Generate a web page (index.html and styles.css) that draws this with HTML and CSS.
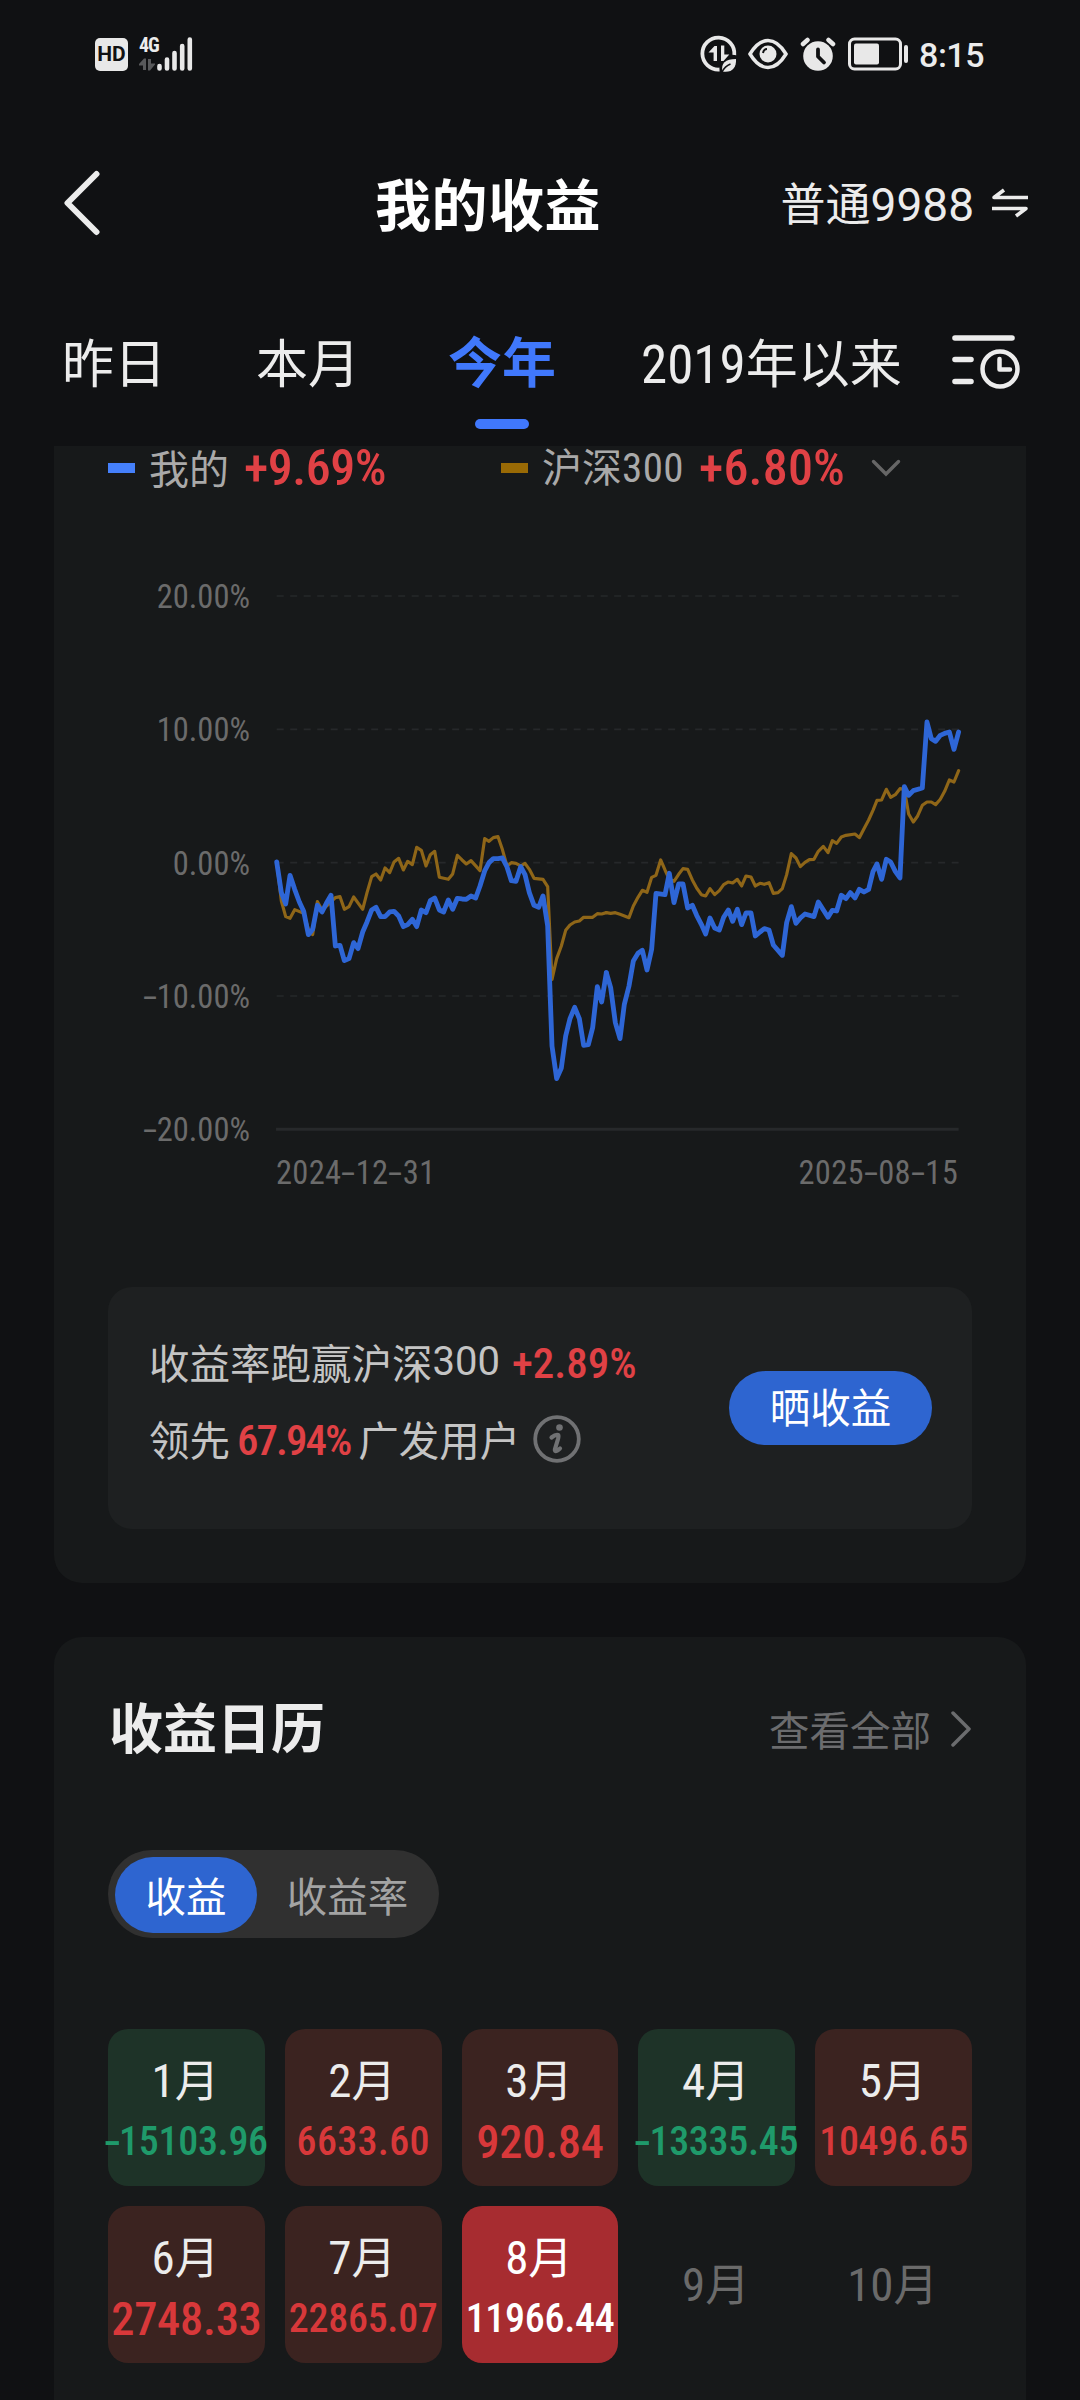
FILE: index.html
```html
<!DOCTYPE html>
<html lang="zh-CN">
<head>
<meta charset="utf-8">
<title>我的收益</title>
<link rel="stylesheet" href="styles.css">
</head>
<body>
<div class="screen">
  <div class="status-bar">
    <div class="status-left">
      <span class="hd">HD</span>
      <span class="network"><span class="network-type">4G</span>
        <svg width="17" height="13" viewBox="0 0 17 13" fill="#58595b"><path d="M0 6 5 0.5h2V12H4V7.5H0zM16 6.500l-5 6H9V1h3v4.500h4z"/></svg>
      </span>
      <svg class="bars" width="36" height="34" viewBox="0 0 36 34" stroke="#e8e8e8" stroke-width="4.600" stroke-linecap="round"><path d="M2.500 29v2.500M10 22.500v9M17.500 16v15.500M25.200 9v22.500M32.800 2.500v29"/></svg>
    </div>
    <div class="status-right">
      <svg width="38" height="38" viewBox="0 0 38 38" fill="none" stroke="#e8e8e8"><path d="M34.300 20A16 16 0 1 0 19.500 34.500" stroke-width="3.800"/><path d="M8.500 17.500 14.500 11h2.500v15h-3.400v-8.500zM21 10.500h3.300v9h5L23.500 26H21z" fill="#e8e8e8" stroke="none"/><path d="M22.500 36.500c-2-8 3-12.500 13.500-12.500 .5 9-4 14-13.500 12.500z" fill="#e8e8e8" stroke="none"/><path d="M22 37c2-4 5-6.500 8.500-8" stroke="#101113" stroke-width="1.500"/></svg>
      <svg width="40" height="34" viewBox="0 0 40 34"><path d="M2 17C8 7 14 3.500 20 3.500S32 7 38 17C32 27 26 30.500 20 30.500S8 27 2 17z" fill="none" stroke="#e8e8e8" stroke-width="3.500"/><circle cx="20" cy="17" r="8.500" fill="#e8e8e8"/><path d="M15 16c.5-2.500 2-4 4-4" fill="none" stroke="#101113" stroke-width="2"/></svg>
      <svg width="36" height="36" viewBox="0 0 36 36"><circle cx="18" cy="20" r="14.800" fill="#e8e8e8"/><path d="M3 8 7.500 4M33 8 28.500 4" stroke="#e8e8e8" stroke-width="4.500" stroke-linecap="round"/><path d="M18 13.500v7l6 6" fill="none" stroke="#101113" stroke-width="3.800" stroke-linecap="round" stroke-linejoin="round"/></svg>
      <svg width="62" height="34" viewBox="0 0 62 34"><rect x="1.500" y="2" width="51" height="30" rx="5" fill="none" stroke="#e8e8e8" stroke-width="3"/><rect x="6" y="6.500" width="25" height="21" rx="2" fill="#e8e8e8"/><path d="M58 10v14" stroke="#e8e8e8" stroke-width="4" stroke-linecap="round"/></svg>
      <span class="clock">8:15</span>
    </div>
  </div>

  <header class="nav">
    <svg class="back" width="36" height="66" viewBox="0 0 36 66" fill="none" stroke="#ececec" stroke-width="6" stroke-linecap="round" stroke-linejoin="round"><path d="M32.500 4 3.500 33l29 29"/></svg>
    <h1 class="nav-title">我的收益</h1>
    <div class="account">
      <span>普通<span class="account-no">9988</span></span>
      <svg width="38" height="30" viewBox="0 0 38 30" fill="none" stroke="#ececec" stroke-width="3.600" stroke-linejoin="round"><path d="M37 9.500H3L13 2"/><path d="M1 20.500h34L25 28"/></svg>
    </div>
  </header>

  <nav class="tabs">
    <span class="tab">昨日</span>
    <span class="tab">本月</span>
    <span class="tab tab-active">今年</span>
    <span class="tab tab-since"><span class="num tab-year">2019</span>年以来</span>
    <svg class="history" width="68" height="56" viewBox="0 0 68 56" fill="none" stroke="#ececec" stroke-width="5.600" stroke-linecap="round"><path d="M3 4h57M3 25.500h16M3 47.500h16"/><circle cx="48" cy="35" r="17.500" stroke-width="4.500"/><path d="M47.500 25v10.500H58" stroke-width="4.500" stroke-linejoin="round"/></svg>
  </nav>

  <section class="card card-chart">
    <div class="legend">
      <div class="legend-item legend-mine">
        <i class="swatch swatch-mine"></i><span class="legend-name">我的</span><b class="num rate">+9.69%</b>
      </div>
      <div class="legend-item">
        <i class="swatch swatch-index"></i><span class="legend-name">沪深<span class="num legend-no">300</span></span><b class="num rate rate-index">+6.80%</b>
        <svg class="expand" width="30" height="18" viewBox="0 0 30 18" fill="none" stroke="#666" stroke-width="3.400" stroke-linecap="round"><path d="M2.500 2.500 15 15 27.500 2.500"/></svg>
      </div>
    </div>

    <div class="chart">
      <div class="axis-y num">
        <span>20.00%</span><span>10.00%</span><span>0.00%</span><span><i class="dash">-</i>10.00%</span><span><i class="dash">-</i>20.00%</span>
      </div>
      <div class="plot">
        <svg class="lines" viewBox="0 -310 2052 1600" width="684" height="533.300" fill="none">
          <g stroke="#26282a" stroke-width="5" stroke-dasharray="21 19.500">
            <path d="M2-310h2046M2 90h2046M2 490h2046M2 890h2046"/>
          </g>
          <path d="M0 1290h2048" stroke="#27292b" stroke-width="9"/>
          <g class="series-index">
            <polyline transform="translate(-48 0)" points="50,488 64,605 77,652 90,657 104,631 131,642 145,690 158,706 172,607 186,632 213,608 226,595 240,592 253,630 267,622 281,593 308,630 321,580 335,532 348,524 362,542 375,506 389,520 402,488 416,477 430,512 443,486 457,496 470,444 484,453 498,500 511,466 524,456 538,534 565,540 578,524 592,468 606,482 619,494 633,484 660,514 674,418 687,426 700,415 714,412 727,450 741,500 754,490 768,492 782,500 795,492 808,510 822,537 849,540 863,562 876,840 890,778 904,740 917,693 930,677 944,668 958,665 971,654 998,654 1012,643 1025,644 1039,640"/>
            <polyline transform="translate(972 0)" points="19,640 32,642 46,640 60,645 87,655 100,620 114,594 127,573 141,579 155,534 168,528 182,482 195,512 208,540 222,546 236,525 249,508 263,510 277,542 290,566 304,586 317,590 330,568 344,586 358,574 371,556 385,548 398,551 412,540 425,560 438,530 453,533 466,560 480,552 493,555 507,550 520,582 534,580 547,568 560,526 574,463 588,476 601,502 615,489 628,481 642,480 655,456 670,441 684,460 697,424 710,432 724,413 738,408 765,404 778,415 792,388 806,362 819,333 831,303 845,302 859,270 872,294 886,286 900,268 913,270 926,344 940,368 953,350 967,318 981,308 994,308 1007,316 1021,300 1034,276 1048,242 1062,248 1076,214"/>
          </g>
          <g class="series-mine">
            <polyline transform="translate(-48 0)" points="50,488 64,580 77,614 90,528 104,570 118,608 131,636 145,706 158,690 172,618 186,638 199,612 213,588 226,740 240,738 253,784 267,778 281,730 294,748 308,698 321,668 335,632 348,624 362,652 375,652 389,638 402,636 416,650 430,682 443,676 457,660 470,682 484,632 498,640 511,604 524,596 538,632 551,638 565,602 578,630 592,597 606,599 619,600 633,590 647,596 660,560 674,515 687,490 700,478 714,478 727,476 741,503 754,544 768,546 782,502 795,526 808,580 822,618 836,624 849,590 863,680 876,1040 890,1138 904,1106 917,1010 930,958 944,924 958,958 971,1038 985,1036 998,985 1012,862 1025,908 1039,820"/>
            <polyline transform="translate(972 0)" points="19,820 32,865 46,970 60,1018 73,915 87,860 100,785 114,762 127,753 141,812 155,750 168,582 195,586 208,522 222,610 236,554 249,554 263,626 277,618 290,648 304,675 317,704 330,656 344,686 358,692 371,654 385,632 398,666 412,630 425,676 438,641 453,641 466,710 480,698 493,688 507,692 520,737 547,768 560,670 574,622 588,672 601,656 615,644 642,652 655,608 684,654 697,633 710,635 724,588 738,598 751,580 765,596 778,570 792,578 806,570 819,517 831,494 845,540 859,480 872,488 886,516 900,536 913,262 926,288 940,274 967,266 981,68 994,118 1007,126 1021,108 1034,102 1048,98 1062,150 1076,98"/>
          </g>
        </svg>
        <div class="axis-x num"><span>2024<i class="dash">-</i>12<i class="dash">-</i>31</span><span>2025<i class="dash">-</i>08<i class="dash">-</i>15</span></div>
      </div>
    </div>

    <div class="summary">
      <div class="summary-text">
        <p>收益率跑赢沪深<span class="summary-no">300</span><b class="num beat">+2.89%</b></p>
        <p>领先<b class="num lead">67.94%</b>广发用户
          <svg class="info" width="48" height="48" viewBox="0 0 48 48"><circle cx="24" cy="24" r="21.800" fill="none" stroke="#707173" stroke-width="3.800"/><circle cx="26.500" cy="12.500" r="3.300" fill="#707173"/><path d="M18.500 22.500c2.500-2 5-3 6.500-2.500 1 .5.500 2 0 4l-3 10c-.5 2.500.5 3.500 5-.5" fill="none" stroke="#707173" stroke-width="4.200" stroke-linecap="round"/></svg>
        </p>
      </div>
      <button class="share">晒收益</button>
    </div>
  </section>

  <section class="card card-calendar">
    <div class="card-head">
      <h2>收益日历</h2>
      <a class="more">查看全部<svg width="22" height="36" viewBox="0 0 22 36" fill="none" stroke="#6b6c6e" stroke-width="3.500" stroke-linecap="round" stroke-linejoin="round"><path d="M3 2l16 16L3 34"/></svg></a>
    </div>
    <div class="toggle"><span class="toggle-item toggle-on">收益</span><span class="toggle-item">收益率</span></div>
    <div class="months">
      <div class="month loss"><span class="name"><span class="num">1</span>月</span><span class="num value"><i class="dash">-</i>15103.96</span></div>
      <div class="month gain"><span class="name"><span class="num">2</span>月</span><span class="num value short">6633.60</span></div>
      <div class="month gain"><span class="name"><span class="num">3</span>月</span><span class="num value large">920.84</span></div>
      <div class="month loss"><span class="name"><span class="num">4</span>月</span><span class="num value"><i class="dash">-</i>13335.45</span></div>
      <div class="month gain"><span class="name"><span class="num">5</span>月</span><span class="num value">10496.65</span></div>
      <div class="month gain"><span class="name"><span class="num">6</span>月</span><span class="num value large">2748.33</span></div>
      <div class="month gain"><span class="name"><span class="num">7</span>月</span><span class="num value">22865.07</span></div>
      <div class="month current"><span class="name"><span class="num">8</span>月</span><span class="num value">11966.44</span></div>
      <div class="month future"><span class="name"><span class="num">9</span>月</span></div>
      <div class="month future"><span class="name"><span class="num">10</span>月</span></div>
    </div>
  </section>
</div>
</body>
</html>
```
FILE: styles.css
```css
* { box-sizing: border-box; margin: 0; padding: 0; }

body {
  background: #101113;
  color: #ececec;
  font-family: "Noto Sans CJK SC", sans-serif;
}

svg { display: block; flex: none; }

.screen {
  width: 1080px;
  height: 2400px;
  overflow: hidden;
  display: flex;
  flex-direction: column;
}

.num { font-family: "Roboto Condensed", Roboto, sans-serif; }

.dash {
  display: inline-block;
  font-style: normal;
  transform: scaleX(1.800);
  margin: 0 3px;
}

/* status bar */
.status-bar {
  flex: none;
  height: 108px;
  padding: 0 97px 0 95px;
  display: flex;
  justify-content: space-between;
  align-items: center;
}
.status-left, .status-right { display: flex; align-items: center; }
.hd {
  width: 33px;
  height: 33px;
  border-radius: 5px;
  background: #e8e8e8;
  color: #101113;
  font: 700 21px/33px Roboto, sans-serif;
  text-align: center;
}
.network { width: 18px; height: 34px; margin-left: 11px; display: flex; flex-direction: column; justify-content: space-between; }
.network-type {
  font: 700 20px/16px "Roboto Condensed", Roboto, sans-serif;
  white-space: nowrap;
  letter-spacing: -1px;
}
.bars { margin-left: 0; }
.status-right svg:nth-child(2) { margin-left: 10px; }
.status-right svg:nth-child(3) { margin-left: 12px; }
.status-right svg:nth-child(4) { margin-left: 12px; }
.clock { margin: 1px -1px 0 9px; font: 500 34px/40px Roboto, sans-serif; letter-spacing: -.5px; }

/* navigation */
.nav {
  flex: none;
  height: 190px;
  padding: 0 51px 0 64px;
  display: grid;
  grid-template-columns: 311px 1fr auto;
  align-items: center;
}
.nav-title { margin-top: -3px; font-size: 56px; font-weight: 700; line-height: 80px; letter-spacing: .5px; color: #fff; }
.account { display: flex; align-items: center; gap: 17px; font-size: 45px; line-height: 60px; }
.account-no { font-family: Roboto, sans-serif; font-size: 46px; }

/* period tabs */
.tabs {
  flex: none;
  height: 148px;
  padding: 23px 60px 0 62px;
  display: flex;
  align-items: flex-start;
}
.tab { font-size: 52px; line-height: 80px; white-space: nowrap; }
.tab + .tab { margin-left: 90px; }
.tab + .tab-active { margin: -1px 0 0 88px; font-size: 54px; font-weight: 700; color: #4078fc; }
.tab + .tab-since { margin-left: 85px; }
.tab-active::after {
  content: "";
  display: block;
  width: 54px;
  height: 10px;
  margin: 19px auto 0;
  border-radius: 5px;
  background: #4078fc;
}
.tab-year { font-size: 53px; }
.history { margin: 13px 0 0 auto; }

/* cards */
.card { flex: none; margin: 0 54px; padding: 0 54px; background: #17191a; }
.card-chart { height: 1137px; border-radius: 0 0 28px 28px; }
.card-calendar { height: 800px; margin-top: 54px; border-radius: 28px 28px 0 0; }

.legend { height: 44px; display: flex; align-items: center; font-size: 40px; line-height: 44px; color: #a9a9a9; }
.legend-mine { width: 393px; }
.legend-item { display: flex; align-items: center; }
.legend-name { margin-top: -3px; }
.swatch { width: 27px; height: 10px; margin-right: 14px; }
.swatch-mine { background: #4580fb; }
.swatch-index { background: #996a05; }
.legend-no { font-size: 41px; letter-spacing: .4px; }
.rate { margin-left: 15px; font-size: 50px; font-weight: 500; letter-spacing: -.5px; color: #e04145; }
.rate-index { letter-spacing: .2px; }
.expand { margin-left: 26px; }

/* chart */
.chart { margin-top: 83px; height: 714px; display: flex; }
.axis-y {
  width: 142px;
  height: 581px;
  padding-top: 1px;
  display: flex;
  flex-direction: column;
  justify-content: space-between;
  text-align: right;
  font-size: 32.500px;
  line-height: 46.700px;
  color: #6b6b6b;
}
.plot { margin: 23px 0 0 26px; width: 684px; }
.lines { overflow: visible; }
.lines polyline { stroke-linejoin: round; stroke-linecap: round; }
.series-index { stroke: #8f6618; stroke-width: 9.500; }
.series-mine { stroke: #2e66d6; stroke-width: 14.500; }
.axis-x { margin-top: 21px; padding-right: 2px; display: flex; justify-content: space-between; font-size: 32.500px; line-height: 46px; letter-spacing: .3px; color: #6b6b6b; }

/* comparison box */
.summary {
  height: 242px;
  padding: 36px 40px 0 41px;
  display: flex;
  justify-content: space-between;
  border-radius: 24px;
  background: #1e2021;
}
.summary-text { font-size: 40.500px; line-height: 78px; color: #c4c4c4; }
.summary-text p { display: flex; align-items: center; height: 77px; white-space: nowrap; }
.summary-no { font-family: Roboto, sans-serif; font-size: 40px; }
.beat, .lead { padding-top: 2px; font-size: 43px; font-weight: 500; color: #e04145; }
.beat { margin-left: 12px; }
.lead { margin: 0 8px 0 7px; letter-spacing: -2px; }
.info { margin-left: 13px; }
.share {
  width: 203px;
  height: 74px;
  margin-top: 48px;
  padding-bottom: 4px;
  border: 0;
  border-radius: 37px;
  background: #2e65d0;
  color: #fff;
  font: 400 40.500px/70px "Noto Sans CJK SC", sans-serif;
}

/* calendar */
.card-head { height: 184px; display: flex; justify-content: space-between; align-items: center; }
.card-head h2 { margin: -6px 0 0 1px; font-size: 54px; font-weight: 700; line-height: 80px; }
.more { display: flex; align-items: center; gap: 19px; font-size: 40.500px; line-height: 60px; color: #6b6c6e; }
.toggle {
  width: 331px;
  height: 88px;
  margin-top: 29px;
  padding: 7px 7px 5px;
  display: flex;
  border-radius: 44px;
  background: #303030;
  font-size: 40.500px;
  line-height: 76px;
  text-align: center;
  color: #a3a3a3;
}
.toggle-item { flex: 1; padding-left: 6px; }
.toggle-on { flex: none; width: 142px; padding: 0; border-radius: 38px; background: #2e65d0; color: #fff; }

.months {
  margin-top: 91px;
  display: grid;
  grid-template-columns: repeat(5, 1fr);
  grid-auto-rows: 156.500px;
  gap: 20.500px 20px;
}
.month {
  min-width: 0;
  padding-top: 19px;
  display: flex;
  flex-direction: column;
  align-items: center;
  border-radius: 20px;
}
.name { margin-left: -2px; font-size: 44.500px; line-height: 60px; }
.name .num { font-size: 47px; }
.value { font-size: 40px; font-weight: 500; line-height: 60px; padding-top: 1px; letter-spacing: -.3px; white-space: nowrap; }
.value .dash { margin: 0 1px; transform: scaleX(1.500); }
.short { letter-spacing: .3px; }
.large { font-size: 46.500px; letter-spacing: -.3px; }
.gain { background: #3b2320; }
.gain .value { color: #d8383a; }
.loss { background: #1e3328; }
.loss .value { color: #1f9a6a; }
.current { background: #a72c30; color: #fff; }
.future { padding-top: 46px; color: #6a6a6a; }
```
